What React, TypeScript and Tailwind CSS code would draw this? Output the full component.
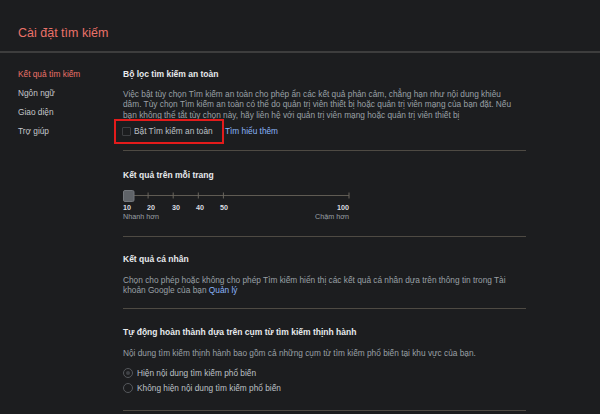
import React, { useState } from "react";

const font = "font-['Liberation_Sans',Arial,sans-serif]";

const navItems = ["Kết quả tìm kiếm", "Ngôn ngữ", "Giao diện", "Trợ giúp"];

function Divider() {
  return <div className="h-px w-full bg-[#4e4a43]" />;
}

function Heading({ children }: { children: React.ReactNode }) {
  return <h3 className="text-[8.5px] leading-[11px] font-bold text-[#e8eaed]">{children}</h3>;
}

function SliderTrack() {
  const ticks = [25.1, 50.2, 75.3, 100.4, 226];
  return (
    <svg width="227" height="12" viewBox="0 0 227 12" className="block">
      <line x1="11" y1="5.5" x2="226" y2="5.5" stroke="#5f5b53" strokeWidth="1" />
      {ticks.map((x) => (
        <line key={x} x1={x} y1="2.5" x2={x} y2="8.5" stroke="#6a665e" strokeWidth="1" />
      ))}
      <rect x="0.5" y="0.5" width="10.5" height="11" rx="1.5" fill="#5f6368" stroke="#73777c" strokeWidth="1" />
    </svg>
  );
}

function Radio({ checked, label }: { checked?: boolean; label: string }) {
  return (
    <label className="flex h-[15px] items-center gap-[4px]">
      <span className="flex h-[10px] w-[10px] items-center justify-center rounded-full border border-[#55585c]">
        {checked && <span className="h-[4px] w-[4px] rounded-full bg-[#3f4246]" />}
      </span>
      <span className="text-[8.3px] text-[#bdc1c6]">{label}</span>
    </label>
  );
}

export default function App() {
  const [active] = useState(0);
  const [safe, setSafe] = useState(false);

  return (
    <div className={`${font} h-[414px] w-[600px] overflow-hidden bg-[#1c1d1f]`}>
      {/* Header */}
      <div className="h-[53px] border-b-2 border-[#3d3d3d] pl-[18px] pt-[26px]">
        <h1 className="text-[12.5px] leading-[15px] text-[#ea7269]">Cài đặt tìm kiếm</h1>
      </div>

      <div className="flex">
        {/* Side nav */}
        <nav className="w-[123px] shrink-0 pl-[18px] pt-[12px]">
          {navItems.map((item, i) => (
            <div
              key={item}
              className={`text-[8.3px] leading-[19px] ${i === active ? "text-[#ea7269]" : "text-[#c4c7cb]"}`}
            >
              {item}
            </div>
          ))}
        </nav>

        {/* Content */}
        <main className="w-[403px] pt-[16px]">
          {/* Safe search */}
          <section>
            <Heading>Bộ lọc tìm kiếm an toàn</Heading>
            <p className="mt-[9px] text-[8.3px] leading-[10.3px] text-[#9aa0a6]">
              Việc bật tùy chọn Tìm kiếm an toàn cho phép ẩn các kết quả phản cảm, chẳng hạn như nội dung khiêu
              <br />
              dâm. Tùy chọn Tìm kiếm an toàn có thể do quản trị viên thiết bị hoặc quản trị viên mạng của bạn đặt. Nếu
              <br />
              bạn không thể tắt tùy chọn này, hãy liên hệ với quản trị viên mạng hoặc quản trị viên thiết bị
            </p>
            <div className="-ml-[9px] -mt-[1px] flex items-center">
              <label className="flex h-[25px] w-[110px] items-center gap-[3px] border-2 border-[#e31b1b] pl-[6px]">
                <input
                  type="checkbox"
                  checked={safe}
                  onChange={(e) => setSafe(e.target.checked)}
                  className="h-[9px] w-[9px] appearance-none rounded-[1px] border border-[#3e3f42] bg-transparent"
                />
                <span className="text-[8.3px] text-[#bdc1c6]">Bật Tìm kiếm an toàn</span>
              </label>
              <a className="ml-[1px] text-[8.3px] text-[#8ab4f8]">Tìm hiểu thêm</a>
            </div>
            <div className="mt-[6px]">
              <Divider />
            </div>
          </section>

          {/* Results per page */}
          <section className="pt-[19px]">
            <Heading>Kết quả trên mỗi trang</Heading>
            <div className="mt-[9px] w-[227px]">
              <SliderTrack />
              <div className="mt-[1.5px] flex text-[7.2px] leading-[9px] font-bold text-[#dadce0]">
                <span className="w-[24px]">10</span>
                <span className="w-[25px]">20</span>
                <span className="w-[24px]">30</span>
                <span className="w-[24px]">40</span>
                <span>50</span>
                <span className="flex-1 pr-[1px] text-right">100</span>
              </div>
              <div className="flex justify-between pr-[1px] text-[7.2px] leading-[9px] text-[#9aa0a6]">
                <span>Nhanh hơn</span>
                <span>Chậm hơn</span>
              </div>
            </div>
            <div className="mt-[15px]">
              <Divider />
            </div>
          </section>

          {/* Personal results */}
          <section className="pt-[16.5px]">
            <Heading>Kết quả cá nhân</Heading>
            <p className="mt-[10px] text-[8.3px] leading-[10.3px] text-[#9aa0a6]">
              Chọn cho phép hoặc không cho phép Tìm kiếm hiển thị các kết quả cá nhân dựa trên thông tin trong Tài
              <br />
              khoản Google của bạn <a className="text-[#8ab4f8]">Quản lý</a>
            </p>
            <div className="mt-[13px]">
              <Divider />
            </div>
          </section>

          {/* Autocomplete */}
          <section className="pt-[17.5px]">
            <Heading>Tự động hoàn thành dựa trên cụm từ tìm kiếm thịnh hành</Heading>
            <p className="mt-[10px] text-[8.3px] leading-[10.3px] text-[#9aa0a6]">
              Nội dung tìm kiếm thịnh hành bao gồm cả những cụm từ tìm kiếm phổ biến tại khu vực của bạn.
            </p>
            <div className="mt-[7.5px]">
              <Radio checked label="Hiện nội dung tìm kiếm phổ biến" />
              <Radio label="Không hiện nội dung tìm kiếm phổ biến" />
            </div>
            <div className="mt-[14px]">
              <Divider />
            </div>
          </section>
        </main>
      </div>
    </div>
  );
}
